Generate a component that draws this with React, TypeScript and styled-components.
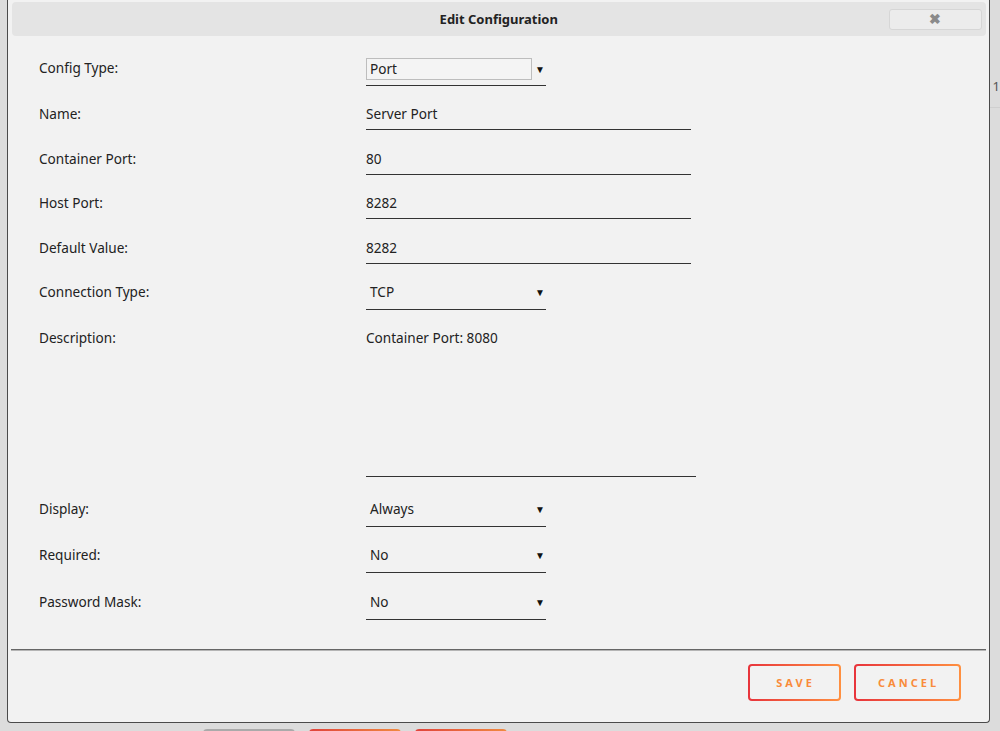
import React from "react";
import styled, { createGlobalStyle } from "styled-components";

const Global = createGlobalStyle`
  html, body { margin: 0; padding: 0; background: #dcdcdc; overflow: hidden; }
  body { font-family: "Noto Sans", "Open Sans", sans-serif; color: #222; }
  * { box-sizing: border-box; }
`;

const Page = styled.div`
  width: 1000px;
  height: 731px;
  overflow: hidden;
  display: flex;
  flex-direction: column;
`;

const TopArea = styled.div`
  display: flex;
  padding-left: 7px;
`;

const Dialog = styled.div`
  width: 984px;
  height: 723px;
  background: #f2f2f2;
  border: 1px solid #4a4a4a;
  border-top: none;
  border-radius: 0 0 4px 4px;
  display: flex;
  flex-direction: column;
`;

const RightStrip = styled.div`
  flex: 1;
  height: 108px;
  border-bottom: 1px solid #cfcfcf;
  padding: 77px 0 0 3px;
  font-size: 13px;
  color: #555;
`;

const TitleBar = styled.div`
  margin: 2px 3px 0 4px;
  height: 34px;
  background: #e4e4e4;
  border-radius: 4px;
  display: grid;
  grid-template-columns: 1fr auto 1fr;
  align-items: center;
`;

const Title = styled.div`
  grid-column: 2;
  font-weight: 700;
  font-size: 13px;
  color: #222;
`;

const CloseButton = styled.button`
  grid-column: 3;
  justify-self: end;
  margin-right: 4px;
  width: 93px;
  height: 21px;
  background: #ececec;
  border: 1px solid #d6d6d6;
  border-radius: 3px;
  color: #8a8a8a;
  font-size: 14px;
  font-weight: 700;
  line-height: 1;
  padding: 0;
  display: flex;
  align-items: center;
  justify-content: center;
`;

const Form = styled.div`
  padding: 18px 0 0 31px;
`;

const Row = styled.div<{ $h: number }>`
  display: grid;
  grid-template-columns: 327px auto;
  align-items: start;
  height: ${(p) => p.$h}px;
`;

const Label = styled.div`
  font-size: 13.6px;
  line-height: 18px;
  padding-top: 5px;
  color: #222;
`;

const TextField = styled.div<{ $w: number }>`
  width: ${(p) => p.$w}px;
  font-size: 13.6px;
  line-height: 18px;
  padding: 5px 0 6px;
  border-bottom: 1px solid #333;
`;

const SelectField = styled.div`
  width: 180px;
  font-size: 13.6px;
  line-height: 18px;
  padding: 5px 0 8px 4px;
  border-bottom: 1px solid #333;
  display: flex;
  justify-content: space-between;
  align-items: center;
`;

const Arrow = styled.span`
  font-size: 10px;
  line-height: 1;
  color: #111;
  margin-right: 1px;
`;

const BoxSelectField = styled.div`
  width: 180px;
  padding-top: 4px;
  border-bottom: 1px solid #333;
  padding-bottom: 5px;
  display: flex;
  align-items: center;
  gap: 3px;
`;

const SelectBox = styled.div`
  width: 171px;
  height: 22px;
  border: 1px solid #bdbdbd;
  background: #f4f4f4;
  font-size: 13.6px;
  line-height: 20px;
  padding-left: 3px;
`;

const TextArea = styled.div`
  width: 330px;
  height: 153px;
  font-size: 13.6px;
  line-height: 18px;
  padding-top: 5px;
  border-bottom: 1px solid #333;
`;

const Separator = styled.div`
  margin: 29px 3px 0 3px;
  border-top: 1px solid #666;
  height: 2px;
  border-bottom: 1px solid #b5b5b5;
`;

const Footer = styled.div`
  display: flex;
  justify-content: flex-end;
  gap: 13px;
  padding: 13px 28px 0 0;
`;

const GradientButton = styled.button<{ $w: number }>`
  width: ${(p) => p.$w}px;
  height: 37px;
  border: 2px solid transparent;
  border-radius: 4px;
  background: linear-gradient(#f2f2f2, #f2f2f2) padding-box,
    linear-gradient(90deg, #e8343c, #ff9040) border-box;
  color: #f98b3a;
  font-family: "Noto Sans", sans-serif;
  font-size: 11px;
  font-weight: 700;
  letter-spacing: 3px;
  padding: 0 0 0 3px;
`;

const BottomRow = styled.div`
  display: flex;
  gap: 14px;
  padding: 6px 0 0 203px;
`;

const BottomTab = styled.div<{ $gray?: boolean; $w: number }>`
  width: ${(p) => p.$w}px;
  height: 10px;
  border-radius: 4px 4px 0 0;
  background: ${(p) =>
    p.$gray ? "#aaaaaa" : "linear-gradient(90deg, #e0443c, #f08a40)"};
`;

export default function App() {
  return (
    <Page>
      <Global />
      <TopArea>
        <Dialog>
          <TitleBar>
            <Title>Edit Configuration</Title>
            <CloseButton>✖</CloseButton>
          </TitleBar>
          <Form>
            <Row $h={46}>
              <Label>Config Type:</Label>
              <BoxSelectField>
                <SelectBox>Port</SelectBox>
                <Arrow>▼</Arrow>
              </BoxSelectField>
            </Row>
            <Row $h={45}>
              <Label>Name:</Label>
              <TextField $w={325}>Server Port</TextField>
            </Row>
            <Row $h={44}>
              <Label>Container Port:</Label>
              <TextField $w={325}>80</TextField>
            </Row>
            <Row $h={45}>
              <Label>Host Port:</Label>
              <TextField $w={325}>8282</TextField>
            </Row>
            <Row $h={44}>
              <Label>Default Value:</Label>
              <TextField $w={325}>8282</TextField>
            </Row>
            <Row $h={46}>
              <Label>Connection Type:</Label>
              <SelectField>
                TCP<Arrow>▼</Arrow>
              </SelectField>
            </Row>
            <Row $h={171}>
              <Label>Description:</Label>
              <TextArea>Container Port: 8080</TextArea>
            </Row>
            <Row $h={46}>
              <Label>Display:</Label>
              <SelectField>
                Always<Arrow>▼</Arrow>
              </SelectField>
            </Row>
            <Row $h={47}>
              <Label>Required:</Label>
              <SelectField>
                No<Arrow>▼</Arrow>
              </SelectField>
            </Row>
            <Row $h={32}>
              <Label>Password Mask:</Label>
              <SelectField>
                No<Arrow>▼</Arrow>
              </SelectField>
            </Row>
          </Form>
          <Separator />
          <Footer>
            <GradientButton $w={93}>SAVE</GradientButton>
            <GradientButton $w={107}>CANCEL</GradientButton>
          </Footer>
        </Dialog>
        <RightStrip>1</RightStrip>
      </TopArea>
      <BottomRow>
        <BottomTab $gray $w={92} />
        <BottomTab $w={92} />
        <BottomTab $w={92} />
      </BottomRow>
    </Page>
  );
}
